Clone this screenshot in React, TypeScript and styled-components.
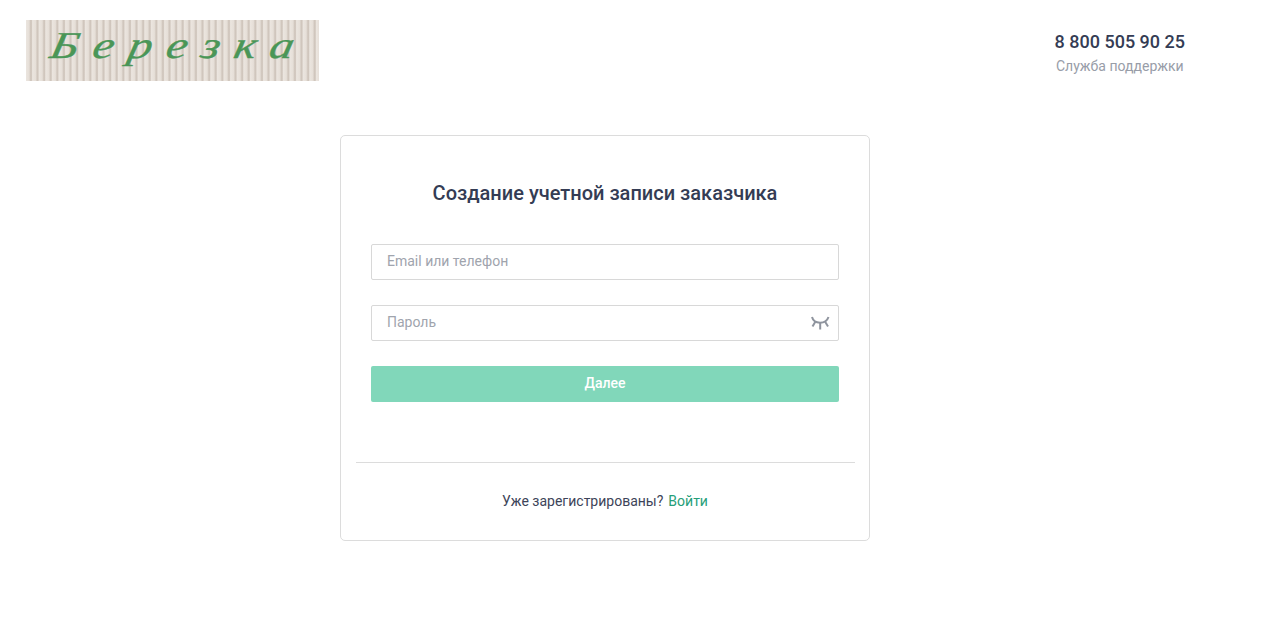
import React from 'react';
import styled, { createGlobalStyle } from 'styled-components';

const GlobalStyle = createGlobalStyle`
  html, body {
    margin: 0;
    padding: 0;
    background: #fff;
    font-family: Roboto, "Liberation Sans", sans-serif;
  }
`;

const Page = styled.div`
  width: 1268px;
  height: 640px;
  overflow: hidden;
  background: #fff;
`;

const Header = styled.header`
  display: flex;
  justify-content: space-between;
  align-items: flex-start;
  height: 135px;
  padding: 20px 83px 0 26px;
  box-sizing: border-box;
`;

const Logo = styled.div`
  width: 293px;
  height: 61px;
  display: flex;
  align-items: center;
  justify-content: center;
  overflow: hidden;
  background: repeating-linear-gradient(
    90deg,
    #ebe5df 0,
    #e6dfd8 3px,
    #d0c6bd 4.6px,
    #d0c6bd 5.4px,
    #ebe5df 6.6px
  );
`;

const LogoText = styled.span`
  font-family: "Liberation Serif", serif;
  font-style: italic;
  font-size: 38px;
  line-height: 61px;
  letter-spacing: 11.5px;
  white-space: nowrap;
  color: #4a9657;
  -webkit-text-stroke: 0.4px #4a9657;
  transform: translate(7px, -5px) skewX(-12deg) scaleX(1.25);
`;

const Contact = styled.div`
  display: flex;
  flex-direction: column;
  align-items: center;
  padding-top: 11px;
`;

const Phone = styled.div`
  font-size: 18px;
  line-height: 22px;
  font-weight: 500;
  color: #343c54;
`;

const Support = styled.div`
  margin-top: 4px;
  font-size: 14px;
  line-height: 18px;
  color: #989da8;
`;

const Main = styled.main`
  width: 1210px;
  display: flex;
  justify-content: center;
`;

const Card = styled.section`
  width: 530px;
  height: 406px;
  box-sizing: border-box;
  border: 1px solid #dcdcdc;
  border-radius: 5px;
  padding: 44px 15px 0;
`;

const Title = styled.h1`
  margin: 0 0 38px;
  font-size: 20px;
  line-height: 26px;
  font-weight: 500;
  text-align: center;
  color: #343c54;
`;

const Form = styled.form`
  display: flex;
  flex-direction: column;
  gap: 25px;
  padding: 0 15px;
`;

const Field = styled.div`
  position: relative;
  height: 36px;
`;

const Input = styled.input`
  width: 100%;
  height: 100%;
  box-sizing: border-box;
  border: 1px solid #d8d8d8;
  border-radius: 2px;
  padding: 0 15px 2px;
  font-family: Roboto, sans-serif;
  font-size: 14px;
  color: #343c54;
  outline: none;

  &::placeholder {
    color: #a0a4ad;
    opacity: 1;
  }
`;

const EyeButton = styled.span`
  position: absolute;
  right: 8px;
  top: 9px;
  width: 22px;
  height: 18px;
  display: flex;
`;

const Submit = styled.button`
  height: 36px;
  border: none;
  border-radius: 2px;
  padding: 0 0 2px;
  background: #81d7ba;
  color: #fff;
  font-family: Roboto, sans-serif;
  font-size: 14px;
  font-weight: 500;
`;

const Divider = styled.hr`
  margin: 60px -1px 0 0;
  border: none;
  border-top: 1px solid #dcdcdc;
`;

const Footer = styled.div`
  margin-top: 29px;
  display: flex;
  justify-content: center;
  gap: 5px;
  font-size: 14px;
  line-height: 18px;
  color: #3d4459;
`;

const SignIn = styled.a`
  color: #269e79;
  text-decoration: none;
`;

const ClosedEye = () => (
  <svg width="22" height="18" viewBox="0 0 22 18" fill="none" stroke="#8f949e" strokeWidth="2">
    <path d="M3 3 C5 10.5 17 10.5 19.5 3" />
    <path d="M11.2 9 V15.5" />
    <path d="M6.5 7.5 L3.5 12.5" />
    <path d="M16 7.5 L19 12.5" />
  </svg>
);

const App: React.FC = () => {
  return (
    <Page>
      <GlobalStyle />
      <Header>
        <Logo>
          <LogoText>Березка</LogoText>
        </Logo>
        <Contact>
          <Phone>8 800 505 90 25</Phone>
          <Support>Служба поддержки</Support>
        </Contact>
      </Header>
      <Main>
        <Card>
          <Title>Создание учетной записи заказчика</Title>
          <Form onSubmit={e => e.preventDefault()}>
            <Field>
              <Input type="text" placeholder="Email или телефон" />
            </Field>
            <Field>
              <Input type="password" placeholder="Пароль" />
              <EyeButton>
                <ClosedEye />
              </EyeButton>
            </Field>
            <Submit type="submit">Далее</Submit>
          </Form>
          <Divider />
          <Footer>
            Уже зарегистрированы?
            <SignIn href="#">Войти</SignIn>
          </Footer>
        </Card>
      </Main>
    </Page>
  );
};

export default App;
